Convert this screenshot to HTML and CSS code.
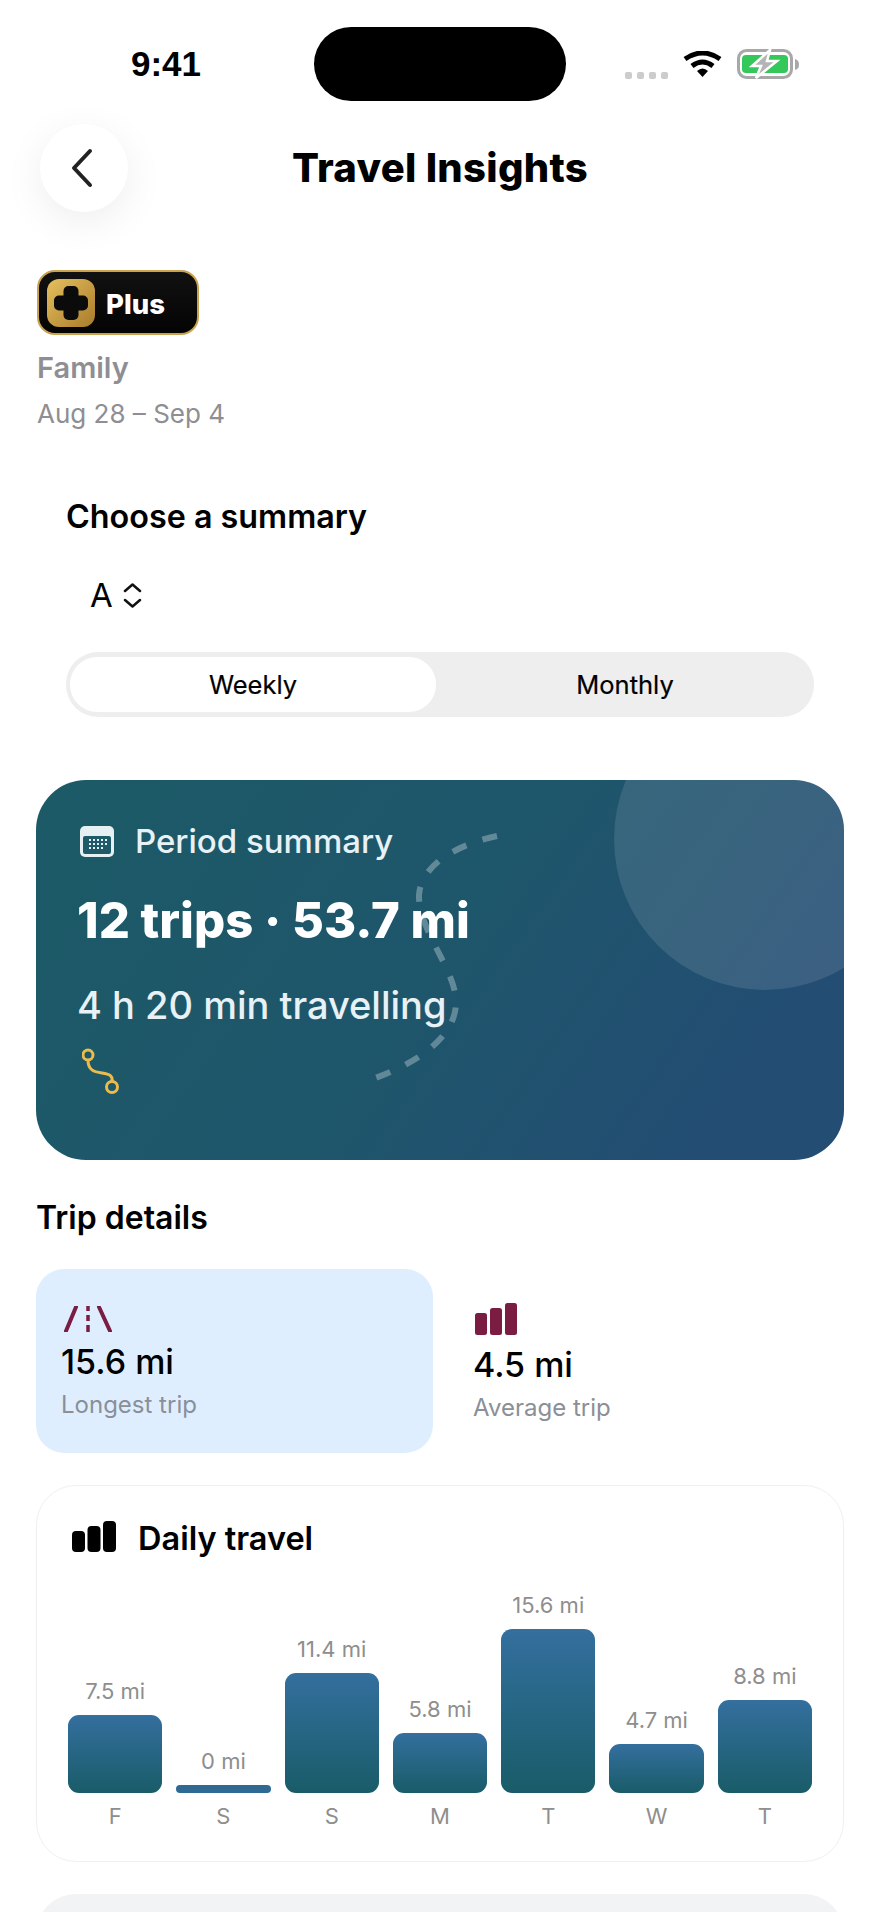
FILE: index.html
```html
<!DOCTYPE html>
<html lang="en">
  <head>
    <meta charset="UTF-8" />
    <meta name="viewport" content="width=device-width, initial-scale=1.0" />
    <title>Travel Insights</title>
    <link rel="stylesheet" href="styles.css">
  </head>
  <body>
    <div class="status-bar">
      <span class="time">9:41</span>
      <div class="island"></div>
      <div class="status-icons">
        <div class="signal"><i></i><i></i><i></i><i></i></div>
        <svg class="wifi" width="39" height="26" viewBox="0 0 39 26">
          <path d="M2 8Q19.5 -4 37 8" fill="none" stroke="#000" stroke-width="5" />
          <path d="M9 15Q19.5 7 30 15" fill="none" stroke="#000" stroke-width="5" />
          <path d="M14 20Q19.5 15 25 20L19.5 26Z" fill="#000" />
        </svg>
        <svg class="battery" width="62" height="30" viewBox="0 0 62 30">
          <rect x="1.5" y="1.5" width="53" height="27" rx="8" fill="#fff" stroke="#a8a8a8" stroke-width="3" />
          <rect x="5" y="6" width="46" height="18" rx="4" fill="#34c759" />
          <path d="M58 10Q62 11 62 15.500Q62 20 58 21Z" fill="#a8a8a8" />
          <path d="M33 1L15 17H24L19 29L40 12H30Z" fill="#b4b4b4" stroke="#fff" stroke-width="2.500" />
        </svg>
      </div>
    </div>

    <header class="top-bar">
      <button class="back-btn">
        <svg width="24" height="40" viewBox="0 0 24 40">
          <path d="M21 3L5 20L21 37" fill="none" stroke="#222" stroke-width="4" stroke-linecap="round" stroke-linejoin="round" />
        </svg>
      </button>
      <h1>Travel Insights</h1>
    </header>

    <main class="content">
      <div class="plus-badge">
        <svg width="48" height="48" viewBox="0 0 48 48">
          <defs>
            <linearGradient id="gold" x1="0" y1="0" x2="1" y2="1">
              <stop offset="0" stop-color="#e5bf5f" />
              <stop offset="1" stop-color="#a97c2a" />
            </linearGradient>
          </defs>
          <rect width="48" height="48" rx="12" fill="url(#gold)" />
          <rect x="16.500" y="7" width="15" height="34" rx="5" fill="#0b0b0b" />
          <rect x="7" y="16.500" width="34" height="15" rx="5" fill="#0b0b0b" />
        </svg>
        <span>Plus</span>
      </div>
      <div class="group-name">Family</div>
      <div class="date-range">Aug 28 – Sep 4</div>

      <section class="chooser">
        <h2>Choose a summary</h2>
        <div class="picker">
          <span>A</span>
          <svg width="19" height="25" viewBox="0 0 19 25">
            <path d="M2 8L9.500 1.500L17 8M2 17L9.500 23.500L17 17" fill="none" stroke="#111" stroke-width="2.500" stroke-linecap="round" stroke-linejoin="round" />
          </svg>
        </div>
        <div class="segments">
          <div class="segment active">Weekly</div>
          <div class="segment">Monthly</div>
        </div>
      </section>

      <section class="summary-card">
        <div class="summary-circle"></div>
        <svg class="summary-dashes" width="808" height="380" viewBox="0 0 808 380">
          <path d="M461 56C420 65 385 85 383 115C382 150 420 190 420 222C420 260 375 287 325 303" fill="none" stroke="#fff" stroke-opacity="0.3" stroke-width="6" stroke-dasharray="15 17" />
        </svg>
        <div class="summary-head">
          <svg width="34" height="31" viewBox="0 0 34 31">
            <rect width="34" height="31" rx="5" fill="#e6f0f3" />
            <rect x="3" y="10" width="28" height="18" rx="2" fill="#1e5a68" />
            <path d="M9 14h2M13 14h2M17 14h2M21 14h2M25 14h2M9 18h2M13 18h2M17 18h2M21 18h2M25 18h2M9 22h2M13 22h2M17 22h2M21 22h2" stroke="#e6f0f3" stroke-width="2" />
          </svg>
          <span>Period summary</span>
        </div>
        <div class="summary-big">12 trips · 53.7 mi</div>
        <div class="summary-sub">4 h 20 min travelling</div>
        <svg class="summary-route" width="38" height="47" viewBox="0 0 38 47">
          <circle cx="6" cy="7" r="5" fill="none" stroke="#ecbb4c" stroke-width="3" />
          <circle cx="30" cy="39" r="5.500" fill="none" stroke="#ecbb4c" stroke-width="3" />
          <path d="M6 12C6 22 12 24 20 25C28 26 31 28 30 33.500" fill="none" stroke="#ecbb4c" stroke-width="3" />
        </svg>
      </section>

      <h2 class="section-title">Trip details</h2>
      <div class="stats">
        <div class="stat stat-active">
          <svg class="road-icon" width="49" height="26" viewBox="0 0 49 26">
            <path d="M12 1L2 25M35 1L46 25" fill="none" stroke="#7b1c42" stroke-width="4" stroke-linecap="round" />
            <path d="M24 0v5M24 9v6M24 19v7" fill="none" stroke="#7b1c42" stroke-width="3.500" />
          </svg>
          <div class="stat-value">15.6 mi</div>
          <div class="stat-label">Longest trip</div>
        </div>
        <div class="stat stat-plain">
          <svg class="bars-icon" width="42" height="32" viewBox="0 0 42 32">
            <rect y="10" width="12" height="22" rx="2.500" fill="#7b1c42" />
            <rect x="15" y="5" width="12" height="27" rx="2.500" fill="#7b1c42" />
            <rect x="30" width="12" height="32" rx="2.500" fill="#7b1c42" />
          </svg>
          <div class="stat-value">4.5 mi</div>
          <div class="stat-label">Average trip</div>
        </div>
      </div>

      <section class="daily-card">
        <div class="daily-head">
          <svg width="44" height="31" viewBox="0 0 44 31">
            <rect y="10" width="13" height="21" rx="4" fill="#000" />
            <rect x="15.500" y="5" width="13" height="26" rx="4" fill="#000" />
            <rect x="31" width="13" height="31" rx="4" fill="#000" />
          </svg>
          <h2>Daily travel</h2>
        </div>
        <div class="chart">
          <div class="day"><span class="day-value">7.5 mi</span><div class="bar" style="height: 78px"></div><span class="day-name">F</span></div>
          <div class="day"><span class="day-value">0 mi</span><div class="bar bar-empty" style="height: 8px"></div><span class="day-name">S</span></div>
          <div class="day"><span class="day-value">11.4 mi</span><div class="bar" style="height: 120px"></div><span class="day-name">S</span></div>
          <div class="day"><span class="day-value">5.8 mi</span><div class="bar" style="height: 60px"></div><span class="day-name">M</span></div>
          <div class="day"><span class="day-value">15.6 mi</span><div class="bar" style="height: 164px"></div><span class="day-name">T</span></div>
          <div class="day"><span class="day-value">4.7 mi</span><div class="bar" style="height: 49px"></div><span class="day-name">W</span></div>
          <div class="day"><span class="day-value">8.8 mi</span><div class="bar" style="height: 93px"></div><span class="day-name">T</span></div>
        </div>
      </section>

      <section class="next-card"></section>
    </main>
  </body>
</html>
```

FILE: styles.css
```css
* {
  box-sizing: border-box;
}

html,
body {
  margin: 0;
  height: 1912px;
  overflow: hidden;
}

body {
  font-family: Inter, "Noto Sans", sans-serif;
  background-color: #fff;
  color: #000;
}

h1,
h2 {
  margin: 0;
}

svg {
  display: block;
}

/* status bar */
.status-bar {
  display: flex;
  align-items: center;
  height: 74px;
  margin-top: 27px;
  padding-left: 130px;
}

.time {
  width: 72px;
  margin-right: 112px;
  font-family: "Liberation Sans", Arial, sans-serif;
  font-size: 35px;
  font-weight: 700;
  text-align: center;
}

.island {
  width: 252px;
  height: 74px;
  background-color: #000;
  border-radius: 37px;
}

.status-icons {
  display: flex;
  align-items: center;
  margin-left: 59px;
}

.signal {
  display: flex;
  gap: 5px;
  margin-top: 22px;
  margin-right: 15px;
}

.signal i {
  width: 7px;
  height: 7px;
  background-color: #ccc;
  border-radius: 2px;
}

.wifi {
  margin-right: 15px;
}

/* header */
.top-bar {
  display: grid;
  grid-template-columns: 129px 1fr 129px;
  align-items: center;
  height: 88px;
  margin-top: 23px;
}

.back-btn {
  display: flex;
  align-items: center;
  justify-content: center;
  width: 88px;
  height: 88px;
  margin-left: 40px;
  padding: 0 6px 0 0;
  background-color: #fff;
  border: none;
  border-radius: 50%;
  box-shadow: 0 10px 40px rgba(0, 0, 0, 0.07);
}

.top-bar h1 {
  font-size: 40px;
  font-weight: 800;
  letter-spacing: 0.3px;
  line-height: 50px;
  text-align: center;
}

.content {
  padding: 0 36px;
}

/* plan badge */
.plus-badge {
  display: flex;
  align-items: center;
  gap: 11px;
  width: 162px;
  height: 65px;
  margin-top: 58px;
  margin-left: 1px;
  padding-left: 8px;
  color: #fff;
  font-size: 27.500px;
  font-weight: 800;
  background: linear-gradient(#111, #040404);
  border: 2px solid #c9a24e;
  border-radius: 18px;
}

.plus-badge span {
  margin-top: 3px;
}

.group-name {
  margin-top: 15px;
  margin-left: 1px;
  color: #8e8e93;
  font-size: 29px;
  font-weight: 600;
  line-height: 36px;
}

.date-range {
  margin-top: 11px;
  margin-left: 1px;
  color: #8e8e93;
  font-size: 26px;
  line-height: 34px;
}

/* summary chooser */
.chooser {
  margin-top: 63px;
  padding-left: 30px;
  padding-right: 30px;
}

.chooser h2 {
  padding-top: 1px;
  font-size: 32.300px;
  font-weight: 600;
  line-height: 43px;
}

.picker {
  display: flex;
  align-items: center;
  gap: 10px;
  margin-top: 35px;
  margin-left: 24px;
  font-size: 33px;
  line-height: 44px;
}

.segments {
  display: flex;
  height: 65px;
  margin-top: 35px;
  padding: 5px 0 5px 4px;
  background-color: #eee;
  border-radius: 32px;
}

.segment {
  flex: 1;
  font-size: 25.500px;
  line-height: 55px;
  text-align: center;
  -webkit-text-stroke: 0.2px #000;
}

.segment.active {
  flex: 0 0 366px;
  background-color: #fff;
  border-radius: 27px;
}

/* period summary card */
.summary-card {
  position: relative;
  height: 380px;
  margin-top: 63px;
  padding: 39px 0 0 41px;
  overflow: hidden;
  color: #fff;
  background: linear-gradient(125deg, #1c5a66 0%, #1e566b 50%, #234d73 85%);
  border-radius: 50px;
}

.summary-circle {
  position: absolute;
  top: -92px;
  left: 578px;
  width: 302px;
  height: 302px;
  background-color: rgba(255, 255, 255, 0.11);
  border-radius: 50%;
}

.summary-dashes {
  position: absolute;
  top: 0;
  left: 0;
}

.summary-head,
.summary-big,
.summary-sub,
.summary-route {
  position: relative;
}

.summary-head {
  display: flex;
  align-items: center;
  gap: 21px;
  margin-left: 3px;
  color: #e8f1f5;
  font-size: 33px;
  font-weight: 500;
  line-height: 44px;
}

.summary-big {
  margin-top: 28px;
  font-size: 49px;
  font-weight: 800;
  line-height: 60px;
}

.summary-sub {
  margin-top: 29px;
  color: #e8f1f5;
  font-size: 38px;
  font-weight: 500;
  line-height: 50px;
}

.summary-route {
  margin-top: 18px;
  margin-left: 5px;
}

/* trip details */
.section-title {
  margin-top: 37px;
  font-size: 32px;
  font-weight: 600;
  line-height: 42px;
}

.stats {
  display: grid;
  grid-template-columns: 1fr 1fr;
  gap: 14px;
  margin-top: 30px;
}

.stat {
  height: 184px;
  padding-top: 37px;
  padding-left: 25px;
}

.stat-active {
  background-color: #dfeeff;
  border-radius: 28px;
}

.stat-plain {
  padding-top: 34px;
  padding-left: 26px;
}

.road-icon {
  margin-left: 3px;
}

.bars-icon {
  margin-left: 2px;
}

.stat-value {
  margin-top: 8px;
  font-size: 34px;
  font-weight: 550;
  line-height: 44px;
}

.stat-label {
  margin-top: 5px;
  color: #8a8f98;
  font-size: 24px;
  line-height: 32px;
}

/* daily travel */
.daily-card {
  margin-top: 32px;
  padding: 29px 31px 31px;
  background-color: #fff;
  border: 1px solid #f0f0f0;
  border-radius: 40px;
}

.daily-head {
  display: flex;
  align-items: center;
  gap: 22px;
  margin-left: 4px;
}

.daily-head svg {
  margin-top: -1px;
}

.daily-head h2 {
  margin-top: 3px;
  font-size: 32.500px;
  font-weight: 600;
  line-height: 41px;
}

.chart {
  display: flex;
  align-items: flex-end;
  gap: 14px;
  margin-top: 32px;
}

.day {
  display: flex;
  flex: 1;
  flex-direction: column;
  color: #8e8e8e;
  font-size: 22px;
  line-height: 28px;
  text-align: center;
}

.day-value {
  margin-bottom: 10px;
}

.day-name {
  margin-top: 9px;
}

.bar {
  background: linear-gradient(#346f9e, #195c68);
  border-radius: 11px;
}

.bar-empty {
  background: #2f6a92;
  border-radius: 4px;
}

.next-card {
  height: 100px;
  margin-top: 32px;
  background-color: #f2f3f5;
  border-radius: 40px;
}
```
